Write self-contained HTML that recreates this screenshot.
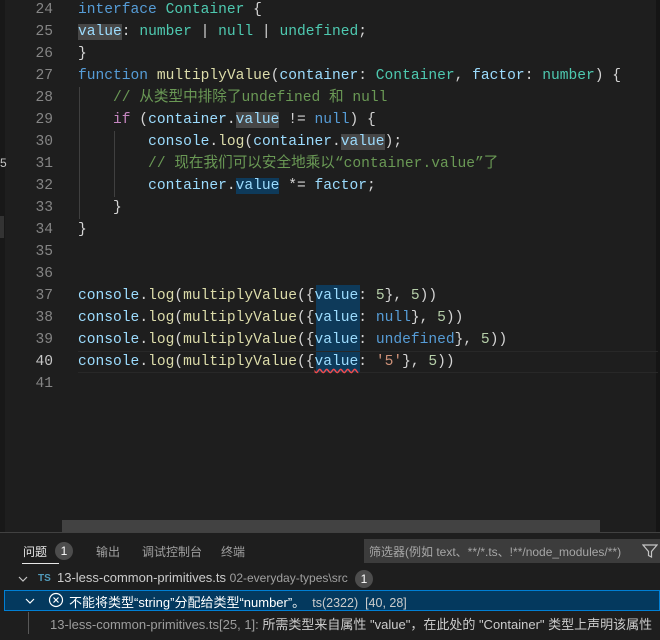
<!DOCTYPE html>
<html><head><meta charset="utf-8"><style>
*{margin:0;padding:0;box-sizing:border-box}
body{width:660px;height:640px;background:#1e1e1e;overflow:hidden;position:relative;font-family:"Liberation Mono","Noto Sans CJK SC",monospace}
.ln{position:absolute;left:20px;width:33px;text-align:right;color:#858585;font-size:14.6px;line-height:22px}
.c{position:absolute;left:78px;font-size:14.6px;line-height:22px;color:#d4d4d4;white-space:pre}
.k{color:#569cd6}.t{color:#4ec9b0}.v{color:#9cdcfe}.f{color:#dcdcaa}.cm{color:#6a9955}.p{color:#c586c0}.n{color:#b5cea8}.s{color:#ce9178}
.hl{background:#474747}.hb{background:#0e3a5a}
.ui{font-family:"Liberation Sans","Noto Sans CJK SC",sans-serif;position:absolute;white-space:nowrap}
</style></head><body>
<div style="position:absolute;left:0;top:0;width:5px;height:533px;background:#181818"></div>
<div style="position:absolute;left:0;top:216px;width:4px;height:22px;background:#333"></div>
<div style="position:absolute;left:0;top:156px;color:#c5c5c5;font-size:12px;font-family:'Liberation Sans'">5</div>
<div style="position:absolute;left:656px;top:0;width:4px;height:533px;background:#151515"></div>
<div style="position:absolute;left:79px;top:87px;width:1px;height:132px;background:#404040"></div>
<div style="position:absolute;left:114px;top:131px;width:1px;height:66px;background:#404040"></div>
<div style="position:absolute;left:316px;top:285px;width:44px;height:88px;background:#0e3a5a"></div>
<div style="position:absolute;left:78px;top:351px;width:580px;height:22px;border-top:1px solid #282828;border-bottom:1px solid #282828"></div>
<div class="ln" style="top:-1px">24</div><div class="c" style="top:-1px"><span class="k">interface</span> <span class="t">Container</span> {</div>
<div class="ln" style="top:21px">25</div><div class="c" style="top:21px"><span class="v hl">value</span>: <span class="t">number</span> | <span class="t">null</span> | <span class="t">undefined</span>;</div>
<div class="ln" style="top:43px">26</div><div class="c" style="top:43px">}</div>
<div class="ln" style="top:65px">27</div><div class="c" style="top:65px"><span class="k">function</span> <span class="f">multiplyValue</span>(<span class="v">container</span>: <span class="t">Container</span>, <span class="v">factor</span>: <span class="t">number</span>) {</div>
<div class="ln" style="top:87px">28</div><div class="c cm" style="top:87px">    // 从类型中排除了undefined 和 null</div>
<div class="ln" style="top:109px">29</div><div class="c" style="top:109px">    <span class="p">if</span> (<span class="v">container</span>.<span class="v hl">value</span> != <span class="k">null</span>) {</div>
<div class="ln" style="top:131px">30</div><div class="c" style="top:131px">        <span class="v">console</span>.<span class="f">log</span>(<span class="v">container</span>.<span class="v hl">value</span>);</div>
<div class="ln" style="top:153px">31</div><div class="c cm" style="top:153px">        // 现在我们可以安全地乘以“container.value”了</div>
<div class="ln" style="top:175px">32</div><div class="c" style="top:175px">        <span class="v">container</span>.<span class="v hb">value</span> *= <span class="v">factor</span>;</div>
<div class="ln" style="top:197px">33</div><div class="c" style="top:197px">    }</div>
<div class="ln" style="top:219px">34</div><div class="c" style="top:219px">}</div>
<div class="ln" style="top:241px">35</div>
<div class="ln" style="top:263px">36</div>
<div class="ln" style="top:285px">37</div><div class="c" style="top:285px"><span class="v">console</span>.<span class="f">log</span>(<span class="f">multiplyValue</span>({<span class="v">value</span>: <span class="n">5</span>}, <span class="n">5</span>))</div>
<div class="ln" style="top:307px">38</div><div class="c" style="top:307px"><span class="v">console</span>.<span class="f">log</span>(<span class="f">multiplyValue</span>({<span class="v">value</span>: <span class="k">null</span>}, <span class="n">5</span>))</div>
<div class="ln" style="top:329px">39</div><div class="c" style="top:329px"><span class="v">console</span>.<span class="f">log</span>(<span class="f">multiplyValue</span>({<span class="v">value</span>: <span class="k">undefined</span>}, <span class="n">5</span>))</div>
<div class="ln" style="top:351px;color:#c6c6c6">40</div>
<div class="c" style="top:351px"><span class="v">console</span>.<span class="f">log</span>(<span class="f">multiplyValue</span>({<span class="v" style="text-decoration:underline wavy #f14c4c;text-underline-offset:3px">value</span>: <span class="s">'5'</span>}, <span class="n">5</span>))</div>
<div class="ln" style="top:373px">41</div>
<div style="position:absolute;left:62px;top:520px;width:538px;height:12px;background:#424242"></div>
<div style="position:absolute;left:0;top:532px;width:660px;height:108px;background:#1e1e1e;border-top:1px solid #414141"></div>
<div class="ui" style="left:23px;top:543px;font-size:12px;color:#e7e7e7">问题</div>
<div style="position:absolute;left:22px;top:563px;width:37px;height:1px;background:#e7e7e7"></div>
<div style="position:absolute;left:55px;top:542px;width:18px;height:18px;border-radius:9px;background:#4d4d4d;color:#fff;font:12px 'Liberation Sans';text-align:center;line-height:18px">1</div>
<div class="ui" style="left:96px;top:543px;font-size:12px;color:#a0a0a0">输出</div>
<div class="ui" style="left:142px;top:543px;font-size:12px;color:#a0a0a0">调试控制台</div>
<div class="ui" style="left:221px;top:543px;font-size:12px;color:#a0a0a0">终端</div>
<div style="position:absolute;left:364px;top:539px;width:296px;height:24px;background:#3c3c3c"></div>
<div class="ui" style="left:369px;top:543px;font-size:12px;color:#a6a6a6">筛选器(例如 text、**/*.ts、!**/node_modules/**)</div>
<svg style="position:absolute;left:642px;top:543px" width="16" height="16"><path d="M1 2H15L9.5 8.5V14L6.5 12.5V8.5Z" fill="none" stroke="#c5c5c5" stroke-width="1.2"/></svg>
<svg style="position:absolute;left:17px;top:574px" width="12" height="10"><path d="M2 3L6 7L10 3" fill="none" stroke="#c5c5c5" stroke-width="1.2"/></svg>
<div class="ui" style="left:38px;top:573px;font-size:10px;font-weight:bold;color:#519aba">TS</div>
<div class="ui" style="left:57px;top:570px;font-size:13px;color:#ccc">13-less-common-primitives.ts <span style="font-size:12px;color:#a0a0a0">02-everyday-types\src</span></div>
<div style="position:absolute;left:355px;top:570px;width:18px;height:18px;border-radius:9px;background:#4d4d4d;color:#fff;font:12px 'Liberation Sans';text-align:center;line-height:18px">1</div>
<div style="position:absolute;left:4px;top:590px;width:656px;height:21px;background:#04395e;border:1px solid #007fd4"></div>
<svg style="position:absolute;left:24px;top:596px" width="12" height="10"><path d="M2 3L6 7L10 3" fill="none" stroke="#fff" stroke-width="1.2"/></svg>
<svg style="position:absolute;left:48px;top:592px" width="16" height="16"><circle cx="8" cy="8" r="6.5" fill="none" stroke="#fff" stroke-width="1.2"/><path d="M5.5 5.5L10.5 10.5M10.5 5.5L5.5 10.5" stroke="#fff" stroke-width="1.2"/></svg>
<div class="ui" style="left:69px;top:592px;font-size:13px;color:#fff">不能将类型“string”分配给类型“number”。 <span style="color:#ccc;font-size:12.5px">&nbsp;ts(2322)&nbsp; [40, 28]</span></div>
<div style="position:absolute;left:28px;top:612px;width:1px;height:22px;background:#585858"></div>
<div class="ui" style="left:50px;top:614px;font-size:13px;color:#9d9d9d">13-less-common-primitives.ts[25, 1]: <span style="color:#ccc">所需类型来自属性 "value"，在此处的 "Container" 类型上声明该属性</span></div>
</body></html>
